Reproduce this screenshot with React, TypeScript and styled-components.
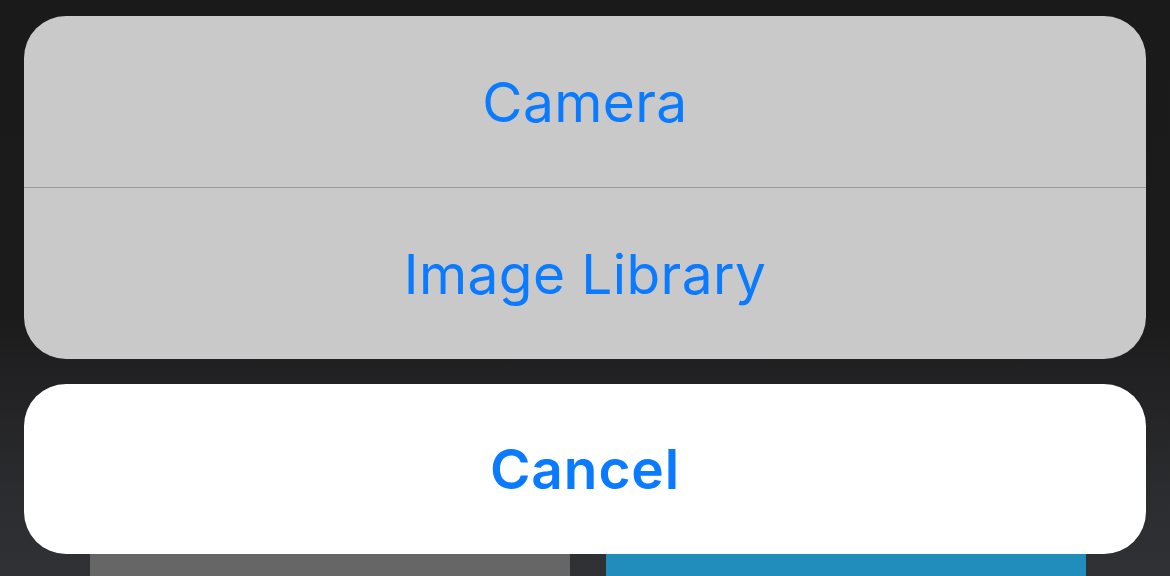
import React from "react";
import styled, { createGlobalStyle } from "styled-components";

const Global = createGlobalStyle`
  html, body { margin: 0; padding: 0; }
  body { width: 1170px; height: 576px; overflow: hidden; }
`;

const Screen = styled.div`
  position: relative;
  width: 1170px;
  height: 576px;
  box-sizing: border-box;
  padding: 16px 24px 0;
  display: flex;
  flex-direction: column;
  gap: 25px;
  background: linear-gradient(180deg, #1b1a1b 0%, #1c1b1c 55%, #2b2c2f 85%, #303134 100%);
  font-family: Inter, "Open Sans", sans-serif;
  overflow: hidden;
`;

const Group = styled.div`
  position: relative;
  z-index: 1;
  background: #c9c9c9;
  border-radius: 42px;
  display: flex;
  flex-direction: column;
  overflow: hidden;
`;

const Option = styled.div<{ $h: number; $divider?: boolean }>`
  height: ${(p) => p.$h}px;
  display: flex;
  align-items: center;
  justify-content: center;
  color: #0a7aff;
  font-size: 55px;
  font-weight: 400;
  letter-spacing: 0.4px;
  border-top: ${(p) => (p.$divider ? "1px solid #9b9b9b" : "none")};
`;

const CancelCard = styled.div`
  position: relative;
  z-index: 1;
  height: 170px;
  background: #ffffff;
  border-radius: 42px;
  display: flex;
  align-items: center;
  justify-content: center;
  color: #0a7aff;
  font-size: 55px;
  font-weight: 600;
  letter-spacing: 0.9px;
`;

const Footer = styled.div`
  position: absolute;
  left: 0;
  right: 0;
  bottom: 0;
  height: 23px;
  display: flex;
  padding-left: 90px;
  gap: 36px;
`;

const FooterButton = styled.div<{ $color: string }>`
  width: 480px;
  height: 100%;
  background: ${(p) => p.$color};
`;

export default function App() {
  return (
    <>
      <Global />
      <Screen>
        <Group>
          <Option $h={171}>Camera</Option>
          <Option $h={171} $divider>Image Library</Option>
        </Group>
        <CancelCard>Cancel</CancelCard>
        <Footer>
          <FooterButton $color="#666666" />
          <FooterButton $color="#218dbd" />
        </Footer>
      </Screen>
    </>
  );
}
